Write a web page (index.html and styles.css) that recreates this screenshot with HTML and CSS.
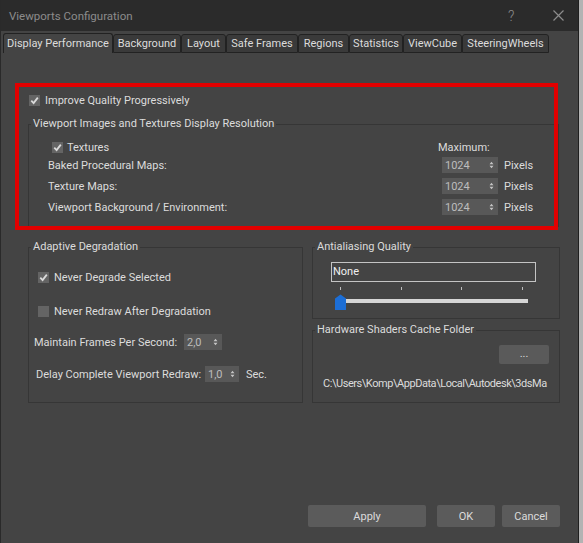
FILE: index.html
```html
<!DOCTYPE html>
<html>
<head>
<meta charset="utf-8">
<title>Viewports Configuration</title>
<link rel="stylesheet" href="styles.css">
</head>
<body>
<div class="dialog">
  <div class="titlebar">
    <span class="title">Viewports Configuration</span>
    <span class="help">?</span>
    <svg class="close" viewBox="0 0 11 11"><path d="M0.5 0.5 L10.5 10.5 M10.5 0.5 L0.5 10.5" stroke="#8c8c8c" stroke-width="1.2" fill="none"/></svg>
  </div>
  <div class="tabs">
    <div class="tab active">Display Performance</div>
    <div class="tab">Background</div>
    <div class="tab">Layout</div>
    <div class="tab">Safe Frames</div>
    <div class="tab">Regions</div>
    <div class="tab">Statistics</div>
    <div class="tab">ViewCube</div>
    <div class="tab">SteeringWheels</div>
  </div>
  <div class="panel">
    <div class="check improve">
      <span class="cb"><svg viewBox="0 0 11 11" width="11" height="11"><path d="M2.3 5.7 L4.6 8.1 L8.8 2.6" stroke="#dadada" stroke-width="1.8" fill="none"/></svg></span>
      <span>Improve Quality Progressively</span>
    </div>
    <fieldset class="group res">
      <legend>Viewport Images and Textures Display Resolution</legend>
      <div class="res-body">
        <div class="res-row first">
          <div class="check tex">
            <span class="cb"><svg viewBox="0 0 11 11" width="11" height="11"><path d="M2.3 5.7 L4.6 8.1 L8.8 2.6" stroke="#dadada" stroke-width="1.8" fill="none"/></svg></span>
            <span>Textures</span>
          </div>
          <span class="max">Maximum:</span>
          <span></span>
        </div>
        <div class="res-row r1">
          <span>Baked Procedural Maps:</span>
          <div class="spin"><span>1024</span><svg class="arrows" viewBox="0 0 5 8"><path d="M0.5 3.2 L2.5 0.8 L4.5 3.2 Z M0.5 4.8 L2.5 7.2 L4.5 4.8 Z" fill="#c4c4c4"/></svg></div>
          <span>Pixels</span>
        </div>
        <div class="res-row">
          <span>Texture Maps:</span>
          <div class="spin"><span>1024</span><svg class="arrows" viewBox="0 0 5 8"><path d="M0.5 3.2 L2.5 0.8 L4.5 3.2 Z M0.5 4.8 L2.5 7.2 L4.5 4.8 Z" fill="#c4c4c4"/></svg></div>
          <span>Pixels</span>
        </div>
        <div class="res-row">
          <span>Viewport Background / Environment:</span>
          <div class="spin"><span>1024</span><svg class="arrows" viewBox="0 0 5 8"><path d="M0.5 3.2 L2.5 0.8 L4.5 3.2 Z M0.5 4.8 L2.5 7.2 L4.5 4.8 Z" fill="#c4c4c4"/></svg></div>
          <span>Pixels</span>
        </div>
      </div>
    </fieldset>

    <div class="columns">
      <fieldset class="group adaptive">
        <legend>Adaptive Degradation</legend>
        <div class="ad-body">
          <div class="check ad1">
            <span class="cb"><svg viewBox="0 0 11 11" width="11" height="11"><path d="M2.3 5.7 L4.6 8.1 L8.8 2.6" stroke="#dadada" stroke-width="1.8" fill="none"/></svg></span>
            <span>Never Degrade Selected</span>
          </div>
          <div class="check ad2">
            <span class="cb"></span>
            <span>Never Redraw After Degradation</span>
          </div>
          <div class="field fps">
            <span>Maintain Frames Per Second:</span>
            <div class="spin"><span>2,0</span><svg class="arrows" viewBox="0 0 5 8"><path d="M0.5 3.2 L2.5 0.8 L4.5 3.2 Z M0.5 4.8 L2.5 7.2 L4.5 4.8 Z" fill="#c4c4c4"/></svg></div>
          </div>
          <div class="field delay">
            <span>Delay Complete Viewport Redraw:</span>
            <div class="spin"><span>1,0</span><svg class="arrows" viewBox="0 0 5 8"><path d="M0.5 3.2 L2.5 0.8 L4.5 3.2 Z M0.5 4.8 L2.5 7.2 L4.5 4.8 Z" fill="#c4c4c4"/></svg></div>
            <span>Sec.</span>
          </div>
        </div>
      </fieldset>
      <div class="rightcol">
        <fieldset class="group aa">
          <legend>Antialiasing Quality</legend>
          <div class="aa-body">
            <div class="combo">None</div>
            <div class="slider">
              <span class="tick t1"></span>
              <span class="tick t2"></span>
              <span class="tick t3"></span>
              <span class="tick t4"></span>
              <span class="track"></span>
              <svg class="thumb" viewBox="0 0 11 16"><path d="M0 4.5 L5.5 0.5 L11 4.5 L11 16 L0 16 Z" fill="#1c6ed6"/></svg>
            </div>
          </div>
        </fieldset>
        <fieldset class="group hw">
          <legend>Hardware Shaders Cache Folder</legend>
          <div class="hw-body">
            <div class="browse">...</div>
            <div class="path">C:\Users\Komp\AppData\Local\Autodesk\3dsMa</div>
          </div>
        </fieldset>
      </div>
    </div>

    <div class="buttons">
      <div class="btn apply">Apply</div>
      <div class="btn ok">OK</div>
      <div class="btn cancel">Cancel</div>
    </div>

    <div class="highlight"></div>
  </div>
</div>
</body>
</html>
```

FILE: styles.css
```css
* { box-sizing: border-box; }
html, body { margin: 0; height: 100%; }
body {
  background: #b3b3b3;
  font-family: Roboto, "Liberation Sans", sans-serif;
  font-size: 11px;
  color: #dcdcdc;
  overflow: hidden;
}
.dialog {
  width: 579px;
  height: 543px;
  background: #444444;
  border-left: 1px solid #2a2a2a;
  border-right: 1px solid #1f1f1f;
  display: flex;
  flex-direction: column;
}
.titlebar {
  height: 31px;
  flex: none;
  background: #2b2b2b;
  display: flex;
  align-items: center;
}
.title {
  margin-left: 8px;
  font-size: 11.5px;
  color: #8c8c8c;
}
.help {
  margin-left: auto;
  width: 8px;
  color: #8c8c8c;
  font-size: 14px;
  font-weight: 300;
}
.close {
  width: 11px;
  height: 11px;
  margin-left: 37px;
  margin-right: 14px;
}

/* tabs */
.tabs {
  flex: none;
  height: 20px;
  margin-top: 2px;
  padding-left: 2px;
  display: flex;
  align-items: flex-end;
}
.tab {
  height: 19px;
  background: #3a3a3a;
  border: 1px solid #222;
  border-radius: 3px 3px 0 0;
  display: flex;
  align-items: center;
  justify-content: center;
  white-space: nowrap;
  color: #dcdcdc;
}
.tab.active {
  height: 20px;
  background: #444444;
  border-bottom: none;
}
.tab:nth-child(1) { width: 110px; }
.tab:nth-child(2) { width: 68px; }
.tab:nth-child(3) { width: 45px; }
.tab:nth-child(4) { width: 72px; }
.tab:nth-child(5) { width: 51px; }
.tab:nth-child(6) { width: 54px; }
.tab:nth-child(7) { width: 59px; }
.tab:nth-child(8) { width: 87px; }

/* panel */
.panel {
  position: relative;
  flex: 1;
  display: flex;
  flex-direction: column;
  padding: 40px 18px 16px 27px;
}
.highlight {
  position: absolute;
  left: 14px;
  top: 30px;
  width: 543px;
  height: 147px;
  border: 4px solid #e20000;
}

.check {
  display: flex;
  align-items: center;
  gap: 5px;
  height: 14px;
  white-space: nowrap;
}
.cb {
  display: block;
  flex: none;
  width: 11px;
  height: 11px;
  background: #646464;
}
.cb svg { display: block; }
.improve { margin-left: 1px; }

.group {
  margin: 0;
  padding: 0;
  min-width: 0;
  border: 1px solid #363636;
}
.group legend {
  margin-left: 2px;
  padding: 0 2px;
  height: 14px;
  line-height: 14px;
  white-space: nowrap;
}

/* resolution group */
.res {
  margin-top: 10px;
  margin-right: 1px;
}
.res-body {
  padding: 9px 24px 11px 19px;
}
.res-row {
  display: grid;
  grid-template-columns: 1fr 56px 30px;
  column-gap: 6px;
  align-items: center;
  height: 16px;
  margin-top: 5px;
  white-space: nowrap;
}
.res-row.first { height: 14px; margin-top: 0; }
.res-row.r1 { margin-top: 3px; }
.tex { margin-left: 4px; gap: 4px; }
.max { margin-left: -4px; }

.spin {
  height: 16px;
  background: #585858;
  color: #bdbdbd;
  display: flex;
  align-items: center;
  justify-content: space-between;
  padding: 0 4px 0 3px;
}
.arrows {
  width: 5px;
  height: 8px;
  display: block;
}

/* columns */
.columns {
  display: grid;
  grid-template-columns: 275px 248px;
  column-gap: 9px;
  height: 163px;
  margin-top: 13px;
}
.ad-body {
  padding: 16px 0 0 5px;
}
.ad1, .ad2 { margin-left: 4px; }
.ad2 { margin-top: 20px; }
.field {
  display: grid;
  align-items: center;
  height: 16px;
  margin-top: 16px;
  white-space: nowrap;
}
.fps { grid-template-columns: 150px 38px; }
.delay {
  margin-left: 2px;
  grid-template-columns: 169px 34px auto;
}
.delay > span:last-child { margin-left: 7px; }

.rightcol {
  min-width: 0;
  display: flex;
  flex-direction: column;
}
.aa-body {
  padding: 8px 0 7px 18px;
}
.combo {
  width: 205px;
  height: 20px;
  border: 1px solid #c4c4c4;
  padding-left: 1px;
  line-height: 18px;
  color: #f0f0f0;
}
.slider {
  position: relative;
  width: 194px;
  height: 26px;
  margin: 3px 0 0 4px;
}
.tick {
  position: absolute;
  top: 2px;
  width: 1px;
  height: 3px;
  background: #bdbdbd;
}
.t1 { left: 5px; }
.t2 { left: 66px; }
.t3 { left: 126px; }
.t4 { left: 187px; }
.track {
  position: absolute;
  left: 10px;
  top: 14px;
  width: 183px;
  height: 4px;
  background: #d6d6d6;
}
.thumb {
  position: absolute;
  left: 0;
  top: 9px;
  width: 11px;
  height: 16px;
}

.hw {
  flex: 1;
  margin-top: 4px;
}
.hw-body {
  padding: 8px 9px 0 10px;
}
.browse {
  width: 50px;
  height: 19px;
  margin-left: auto;
  margin-right: 1px;
  background: #5a5a5a;
  border-radius: 2px;
  text-align: center;
  line-height: 17px;
  color: #dcdcdc;
}
.path {
  margin-top: 13px;
  line-height: 14px;
  letter-spacing: -0.45px;
  white-space: nowrap;
  overflow: hidden;
}

/* buttons */
.buttons {
  margin-top: auto;
  display: flex;
  justify-content: flex-end;
}
.btn {
  height: 22px;
  background: #5b5b5b;
  border-radius: 2px;
  display: flex;
  align-items: center;
  justify-content: center;
  color: #dcdcdc;
}
.apply { width: 118px; margin-right: 11px; }
.ok { width: 58px; margin-right: 7px; }
.cancel { width: 58px; }
```
